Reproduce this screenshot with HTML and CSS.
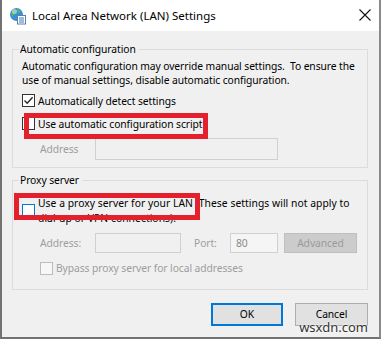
FILE: index.html
```html
<!DOCTYPE html>
<html>
<head>
<meta charset="utf-8">
<link rel="stylesheet" href="styles.css">
</head>
<body>
<div class="window">
  <div class="titlebar">
    <svg class="app-icon" width="18" height="18" viewBox="0 0 18 18">
      <circle cx="7.5" cy="7.5" r="6.5" fill="#3a8fd6"/>
      <path d="M3 4 C5 3 7 4 6.5 6 C6 8 4 7.5 3.5 9.5 C2.5 8 2 6 3 4 Z" fill="#5cb84a"/>
      <path d="M8 2 C10 2.5 12 4 11 6 C9.5 6.5 9 5 8 4 Z" fill="#5cb84a"/>
      <circle cx="5.5" cy="4.5" r="2.5" fill="#ffffff" opacity="0.45"/>
      <rect x="8.5" y="8.5" width="8" height="8.5" fill="#ffffff" stroke="#5a7fa8" stroke-width="1"/>
      <line x1="10" y1="11" x2="15" y2="11" stroke="#3a78c0" stroke-width="1"/>
      <line x1="10" y1="13" x2="15" y2="13" stroke="#3a78c0" stroke-width="1"/>
      <line x1="10" y1="15" x2="15" y2="15" stroke="#3a78c0" stroke-width="1"/>
    </svg>
    <span class="title">Local Area Network (LAN) Settings</span>
    <svg class="close" width="12" height="12" viewBox="0 0 12 12">
      <path d="M0.5 0.5 L11.5 11.5 M11.5 0.5 L0.5 11.5" stroke="#111" stroke-width="1.1" fill="none"/>
    </svg>
  </div>
  <div class="content">
    <fieldset class="group group-auto">
      <legend>Automatic configuration</legend>
      <p class="desc">Automatic configuration may override manual settings.&nbsp; To ensure the<br>use of manual settings, disable automatic configuration.</p>
      <div class="row check-row first">
        <span class="box checked">
          <svg width="11" height="11" viewBox="0 0 11 11"><path d="M1.5 5.5 L4.2 8.3 L9.6 2.2" stroke="#222" stroke-width="1.3" fill="none"/></svg>
        </span>
        <span>Automatically detect settings</span>
      </div>
      <div class="row check-row">
        <span class="box"></span>
        <span>Use automatic configuration script</span>
      </div>
      <div class="row addr-row">
        <span class="label disabled">Address</span>
        <span class="input wide"></span>
      </div>
    </fieldset>
    <fieldset class="group group-proxy">
      <legend>Proxy server</legend>
      <div class="row proxy-row">
        <span class="box focus"></span>
        <span class="proxy-text">Use a proxy server for your LAN (These settings will not apply to<br>dial-up or VPN connections).</span>
      </div>
      <div class="row addr2-row">
        <span class="label disabled">Address:</span>
        <span class="input mid"></span>
        <span class="label disabled port">Port:</span>
        <span class="input port-input">80</span>
        <span class="btn-adv">Advanced</span>
      </div>
      <div class="row bypass-row">
        <span class="box disabled-box"></span>
        <span class="disabled">Bypass proxy server for local addresses</span>
      </div>
    </fieldset>
    <div class="buttons">
      <span class="btn ok">OK</span>
      <span class="btn">Cancel</span>
    </div>
  </div>
  <div class="mark mark1"></div>
  <div class="mark mark2"></div>
  <div class="watermark">wsxdn.com</div>
</div>
</body>
</html>
```
FILE: styles.css
```css
html, body {
  margin: 0;
  padding: 0;
  background: #f0f0f0;
}
body {
  font-family: "Noto Sans", "Open Sans", sans-serif;
  font-size: 10.3px;
  letter-spacing: -0.08px;
  color: #000;
}
.window {
  position: relative;
  width: 381px;
  height: 339px;
  box-sizing: border-box;
  border-left: 2px solid #727272;
  border-right: 2px solid #8a8a8a;
  border-bottom: 2px solid #727272;
  background: #f0f0f0;
  overflow: hidden;
  display: flex;
  flex-direction: column;
}
.titlebar {
  height: 31px;
  flex: none;
  background: #ffffff;
  display: flex;
  align-items: center;
  padding-left: 7px;
}
.app-icon {
  flex: none;
  margin-top: 1px;
}
.title {
  font-size: 11.5px;
  letter-spacing: 0;
  margin-left: 5px;
  flex: 1;
  line-height: 16px;
  margin-top: 1px;
}
.close {
  margin-right: 8px;
  margin-top: -1px;
}
.content {
  flex: 1;
  padding: 10px 11px 0 10px;
  display: flex;
  flex-direction: column;
}
.group {
  margin: 0;
  border: 1px solid #dcdcdc;
  padding: 0 8px 0 8px;
  min-width: 0;
  box-sizing: border-box;
}
.group legend {
  padding: 0 3px 0 1px;
  margin-left: -2px;
  line-height: 16px;
  color: #000;
}
.group-auto {
  height: 127px;
}
.group-proxy {
  margin-top: 4px;
  height: 118px;
}
.desc {
  margin: 2px 0 0 1px;
  line-height: 14px;
  white-space: nowrap;
}
.row {
  display: flex;
  align-items: center;
}
.row > * {
  flex: none;
}
.check-row {
  height: 23px;
}
.check-row.first {
  margin-top: 2px;
}
.box {
  width: 11px;
  height: 11px;
  border: 1px solid #333;
  background: #fff;
  margin-left: 1px;
  margin-right: 3px;
  display: flex;
  align-items: center;
  justify-content: center;
}
.box.focus {
  border-color: #0078d7;
}
.box.disabled-box {
  border-color: #bcbcbc;
  background: #f7f7f7;
  margin-left: 19px;
}
.disabled {
  color: #9d9d9d;
}
.addr-row {
  height: 22px;
  margin-top: 3px;
}
.addr-row .label {
  margin-left: 19px;
  width: 55px;
}
.input {
  box-sizing: border-box;
  height: 22px;
  border: 1px solid #d0d0d0;
  background: #f0f0f0;
}
.input.wide {
  width: 183px;
}
.proxy-row {
  align-items: flex-start;
  margin-top: 8px;
}
.proxy-row .box {
  margin-top: 8px;
}
.proxy-text {
  line-height: 15px;
  letter-spacing: 0.05px;
  white-space: nowrap;
}
.addr2-row {
  margin-top: 7px;
  height: 20px;
}
.addr2-row .label {
  margin-left: 19px;
  width: 55px;
}
.input.mid {
  width: 86px;
  height: 20px;
}
.addr2-row .port {
  margin-left: 13px;
  width: 36px;
}
.port-input {
  width: 48px;
  height: 20px;
  background: #f5f5f5;
  color: #8a8a8a;
  padding-left: 5px;
  line-height: 18px;
}
.btn-adv {
  margin-left: 6px;
  width: 73px;
  height: 20px;
  box-sizing: border-box;
  background: #cccccc;
  border: 1px solid #bfbfbf;
  color: #9b9b9b;
  text-align: center;
  line-height: 18px;
}
.bypass-row {
  margin-top: 6px;
  height: 18px;
}
.buttons {
  display: flex;
  justify-content: flex-end;
  gap: 12px;
  margin-top: 13px;
}
.btn {
  width: 73px;
  height: 23px;
  box-sizing: border-box;
  border: 1px solid #adadad;
  background: #e1e1e1;
  text-align: center;
  line-height: 21px;
}
.btn.ok {
  border: 2px solid #0078d7;
  line-height: 19px;
  width: 72px;
}
.mark {
  position: absolute;
  border: 5px solid #e3202b;
  box-sizing: border-box;
}
.mark1 {
  left: 22px;
  top: 113px;
  width: 184px;
  height: 26px;
}
.mark2 {
  left: 12px;
  top: 193px;
  width: 186px;
  height: 27px;
}
.watermark {
  position: absolute;
  right: 11px;
  bottom: 1px;
  font-size: 13px;
  letter-spacing: 0;
  color: #333;
  text-shadow: 0 0 2px #fff, 0 0 2px #fff;
}
```
